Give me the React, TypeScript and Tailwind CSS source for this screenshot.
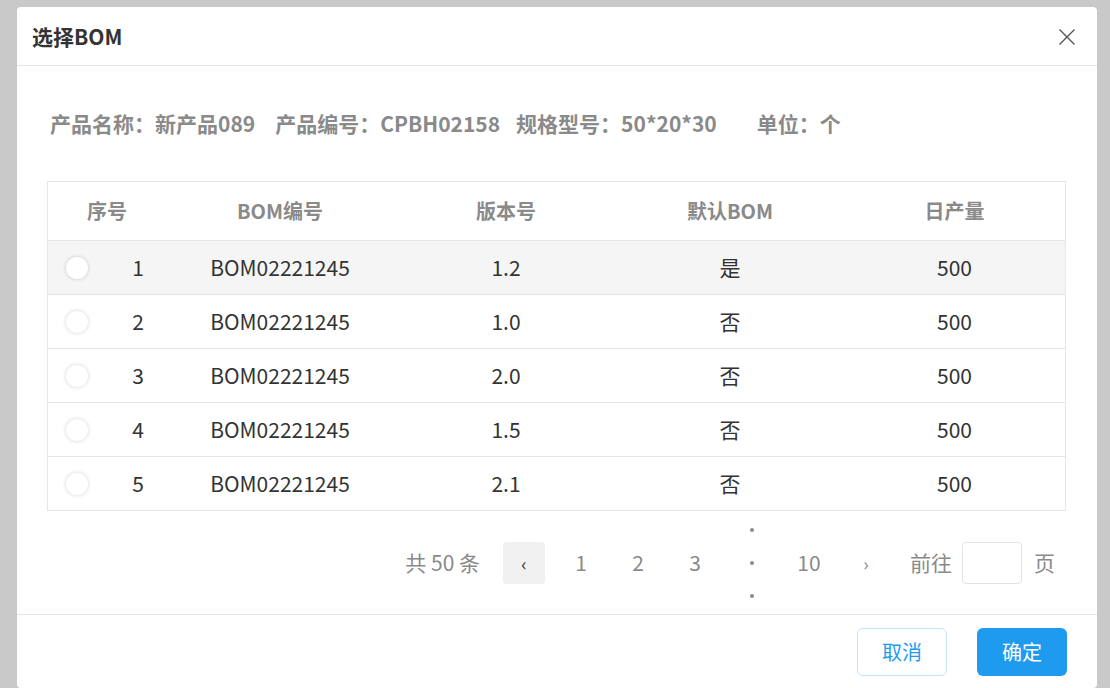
import { useState } from "react";

type BomRow = {
  no: number;
  code: string;
  version: string;
  isDefault: boolean;
  daily: number;
};

const rows: BomRow[] = [
  { no: 1, code: "BOM02221245", version: "1.2", isDefault: true, daily: 500 },
  { no: 2, code: "BOM02221245", version: "1.0", isDefault: false, daily: 500 },
  { no: 3, code: "BOM02221245", version: "2.0", isDefault: false, daily: 500 },
  { no: 4, code: "BOM02221245", version: "1.5", isDefault: false, daily: 500 },
  { no: 5, code: "BOM02221245", version: "2.1", isDefault: false, daily: 500 },
];

const cols = "grid grid-cols-[118px_228px_224px_224px_225px]";

const CloseIcon = () => (
  <svg width="18" height="18" viewBox="0 0 18 18" fill="none">
    <path d="M1.5 1.5 16.5 16.5M16.5 1.5 1.5 16.5" stroke="#555" strokeWidth="1.4" />
  </svg>
);

const Pager = () => {
  const pages = ["1", "2", "3"];
  return (
    <div className="flex h-[103px] items-center justify-end pr-[12px] pt-[1px] text-[21px] text-[#8a8a8a]">
      <span className="mr-[23px]">共 50 条</span>
      <button className="flex h-[42px] w-[42px] items-center justify-center rounded-[4px] bg-[#f0f0f0] text-[18px] text-[#333]">
        ‹
      </button>
      {pages.map((p) => (
        <span key={p} className="ml-[15px] flex h-[42px] w-[42px] items-center justify-center">
          {p}
        </span>
      ))}
      {/* collapsed pages, drawn as a vertical ellipsis */}
      <span className="ml-[15px] flex w-[42px] flex-col items-center gap-[29px]">
        <i className="block h-[4px] w-[4px] rounded-full bg-[#8a8a8a]" />
        <i className="block h-[4px] w-[4px] rounded-full bg-[#8a8a8a]" />
        <i className="block h-[4px] w-[4px] rounded-full bg-[#8a8a8a]" />
      </span>
      <span className="ml-[15px] flex h-[42px] w-[42px] items-center justify-center">10</span>
      <span className="ml-[15px] flex h-[42px] w-[42px] items-center justify-center text-[18px]">›</span>
      <span className="ml-[23px]">前往</span>
      <input className="ml-[10px] h-[42px] w-[60px] rounded-[4px] border border-[#e3e3e3] outline-none" />
      <span className="ml-[12px]">页</span>
    </div>
  );
};

export default function App() {
  const [picked, setPicked] = useState<number | null>(null);

  return (
    <div
      className="h-[688px] w-full overflow-hidden bg-[#c9c9c9] pl-[17px] pt-[7px]"
      style={{ fontFamily: '"Noto Sans CJK SC", "Noto Sans", sans-serif' }}
    >
      <div className="flex h-[681px] w-[1080px] flex-col rounded-[4px] bg-white">
        {/* Header */}
        <div className="flex h-[59px] shrink-0 items-center justify-between border-b border-[#e5e5e5] pl-[15px] pr-[21px] pt-[1px]">
          <h2 className="text-[21px] font-bold text-[#333]">选择BOM</h2>
          <button aria-label="关闭">
            <CloseIcon />
          </button>
        </div>

        {/* Body */}
        <div className="flex-1 px-[30px]">
          <div className="mt-[44px] flex h-[28px] items-center text-[21px] font-bold text-[#8a8a8a]">
            <span className="ml-[3px]">产品名称：新产品089</span>
            <span className="ml-[20px]">产品编号：CPBH02158</span>
            <span className="ml-[16px]">规格型号：50*20*30</span>
            <span className="ml-[40px]">单位：个</span>
          </div>

          <div className="mt-[43px] w-[1019px] border border-[#e6e6e6] text-[21px]">
            <div className={`${cols} h-[58px] items-center text-center text-[20px] font-bold text-[#8a8a8a]`}>
              <span>序号</span>
              <span>BOM编号</span>
              <span>版本号</span>
              <span>默认BOM</span>
              <span>日产量</span>
            </div>
            {rows.map((r, i) => (
              <div
                key={r.no}
                onClick={() => setPicked(r.no)}
                className={`${cols} h-[54px] items-center border-t border-[#e6e6e6] text-center text-[#333] ${
                  i === 0 ? "bg-[#f5f5f5]" : "bg-white"
                }`}
              >
                <div className="flex items-center">
                  <span
                    className={`ml-[18px] block h-[22px] w-[22px] rounded-full bg-white shadow-[0_0_4px_rgba(0,0,0,0.18)] ${
                      picked === r.no ? "border-[6px] border-[#1e9bef]" : ""
                    }`}
                  />
                  <span className="ml-[40px] w-[20px] text-center">{r.no}</span>
                </div>
                <span>{r.code}</span>
                <span>{r.version}</span>
                <span>{r.isDefault ? "是" : "否"}</span>
                <span>{r.daily}</span>
              </div>
            ))}
          </div>

          <Pager />
        </div>

        {/* Footer */}
        <div className="flex h-[75px] shrink-0 justify-end gap-[30px] border-t border-[#e5e5e5] pr-[30px] pt-[13px]">
          <button className="h-[48px] w-[90px] rounded-[6px] border border-[#c3e4fb] bg-white text-[20px] text-[#1e9bef]">
            取消
          </button>
          <button className="h-[48px] w-[90px] rounded-[6px] bg-[#1e9bef] text-[20px] text-white">
            确定
          </button>
        </div>
      </div>
    </div>
  );
}
